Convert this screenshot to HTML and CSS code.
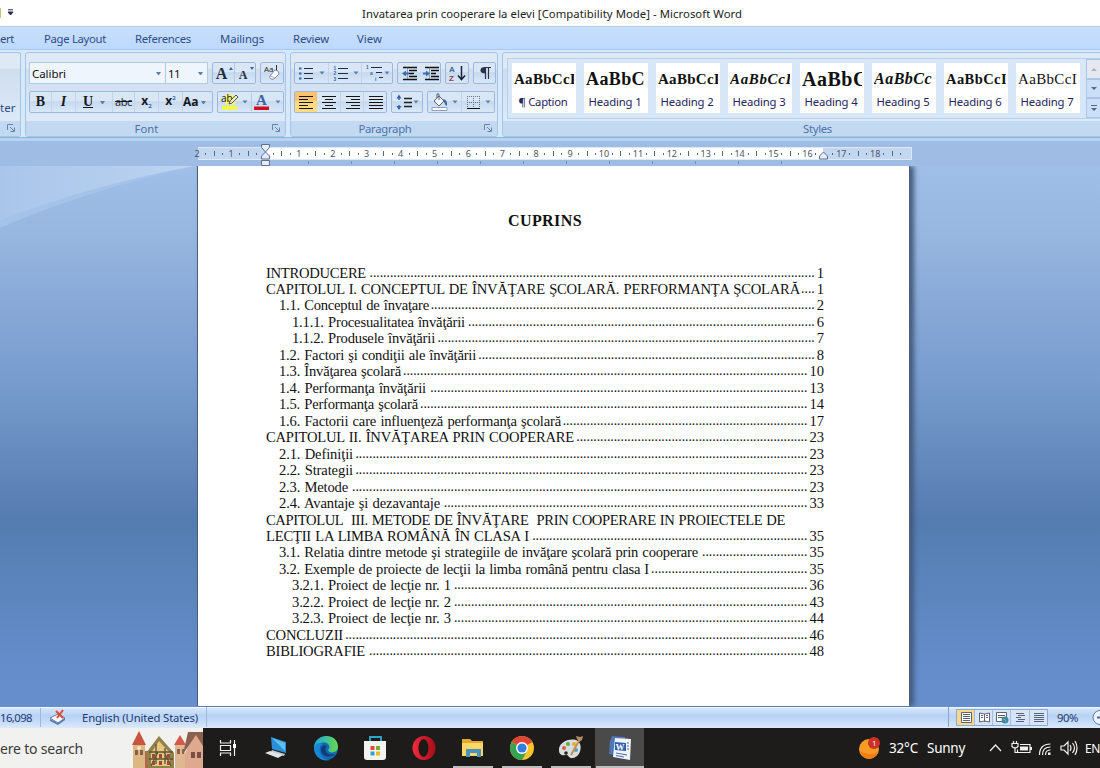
FILE: index.html
```html
<!DOCTYPE html>
<html lang="ro">
<head>
<meta charset="utf-8">
<title>Invatarea prin cooperare la elevi</title>
<link rel="stylesheet" href="styles.css">
</head>
<body>
<div class="window">
  <header class="titlebar">
    <i class="qat-edge"></i>
    <svg class="qat" width="7" height="7"><path d="M1 .8h5M1 3h5L3.500 6z" stroke="#222c50" fill="#222c50"/></svg>
    <span class="fit" data-width="380">Invatarea prin cooperare la elevi [Compatibility Mode] - Microsoft Word</span>
  </header>
  <nav class="tabs">
    <span class="fit tab-insert" data-width="14">ert</span>
    <span class="fit tab-layout" data-width="62">Page Layout</span>
    <span class="fit tab-refs" data-width="56">References</span>
    <span class="fit tab-mail" data-width="44">Mailings</span>
    <span class="fit tab-review" data-width="36">Review</span>
    <span class="fit tab-view" data-width="25">View</span>
  </nav>
  <section class="ribbon">
    <div class="group clipboard">
      <div class="body"><span class="painter">ter</span></div>
      <div class="label"><svg class="launch" width="8" height="8"><path d="M.5 6V.5H6M3 3l4 4M7.500 3.500v4h-4" fill="none" stroke="#6685ad"/></svg></div>
    </div>
    <div class="group font">
      <div class="body">
        <div class="row">
          <div class="combo family"><span class="fit" data-width="34">Calibri</span><i class="caret"></i></div>
          <div class="combo size"><span class="fit" data-width="12">11</span><i class="caret"></i></div>
          <div class="set grow"><span class="glyph big">A<i class="mark up"></i></span><span class="glyph small">A<i class="mark down"></i></span></div>
          <div class="set clear">
            <svg width="22" height="20"><text x="3" y="9" class="tiny">Aa</text><path d="M15.500 2v7" stroke="#333"/><path d="M9 13l5-6q4 0 4 4l-5 5q-5 1-4-3z" fill="#fff" stroke="#7d879f"/><path d="M10 13l4 2" stroke="#a7afc1"/></svg>
          </div>
        </div>
        <div class="row">
          <div class="set styles">
            <span class="cell b">B</span><span class="cell i">I</span><span class="cell u">U</span><span class="cell drop"><i class="caret"></i></span><span class="cell s">abc</span><span class="cell x">x<sub>2</sub></span><span class="cell x">x<sup>2</sup></span><span class="cell aa">Aa<i class="caret"></i></span>
          </div>
          <div class="set colours">
            <svg width="66" height="21"><path d="M4 14.500h15v3H4z" fill="#ffff1c"/><path d="M7 4q5-4 10 1v8H7z" fill="#f6f36b"/><text x="3" y="10" class="ab">ab</text><path d="M11 12l1-3 6-6 2 2-6 6z" fill="#f1edc6" stroke="#555"/><path d="M24.500 8.500h5l-2.500 3zM57.500 8.500h5l-2.500 3z" fill="#5d7fae"/><path d="M33.500 1v18" stroke="#b5cae6"/><path d="M36 14.500h15v3.500H36z" fill="#d0101c"/><text x="38" y="13" class="font-a">A</text></svg>
          </div>
        </div>
      </div>
      <div class="label"><span class="fit" data-width="24">Font</span><svg class="launch" width="8" height="8"><path d="M.5 6V.5H6M3 3l4 4M7.500 3.500v4h-4" fill="none" stroke="#6685ad"/></svg></div>
    </div>
    <div class="group paragraph">
      <div class="body">
        <div class="row">
          <div class="set lists">
            <svg width="98" height="21"><g stroke="#222d42"><path d="M9 5.500h9M9 10.500h9M9 15.500h9M43 5.500h10M43 10.500h10M43 15.500h10M76 4.500h11M81 9.500h6M84 14.500h4" /><path d="M4 5.500h2.500M4 10.500h2.500M4 15.500h2.500" stroke="#3c66aa" stroke-width="2"/></g><path d="M33.500 0v21M66.500 0v21" stroke="#c2d4ec"/><path d="M24.500 8.500h5l-2.500 3zM58.500 8.500h5l-2.500 3zM89.500 8.500h5l-2.500 3z" fill="#5d7fae"/><g class="numbers"><text x="38.500" y="6.500">1</text><text x="38.500" y="12.300">2</text><text x="38.500" y="18.100">3</text><text x="71" y="5.500">1</text><text x="75" y="11.500">a</text><text x="80" y="17.500">i</text></g></svg>
          </div>
          <div class="set indents">
            <svg width="43" height="21"><path d="M5 4.500h14M11 7.500h8M11 10.500h5M11 13.500h8M5 16.500h14M27 4.500h14M33 7.500h8M33 10.500h5M33 13.500h8M27 16.500h14" stroke="#111" stroke-width="1.300"/><path d="M9.500 4.500v12M31.500 4.500v12" stroke="#555" stroke-dasharray="1 1"/><path d="M4 10.500l4-3v2h3v2H8v2zM32 10.500l-4-3v2h-3v2h3v2z" fill="#386cb9"/></svg>
          </div>
          <div class="set sort">
            <svg width="23" height="21"><text x="3" y="8.500" class="sort-a">A</text><text x="3" y="18" class="sort-z">Z</text><path d="M15.500 3v13M12 12.500l3.500 4 3.500-4" fill="none" stroke="#172139" stroke-width="1.500"/></svg>
          </div>
          <div class="set mark-set"><svg width="21" height="21"><path d="M11.500 4v12M14.500 4v12M10 4.500h7" stroke="#2a3345" stroke-width="1.200"/><path d="M11.500 4q-5 0-5 3.200t5 3.300z" fill="#2a3345"/></svg></div>
        </div>
        <div class="row">
          <div class="set aligns">
            <svg width="92" height="21"><path d="M0 0h22v21H0z" fill="#fbc36c"/><path d="M0 9h22v12H0z" fill="#ffdb7d"/><path d="M45.500 0v21M68.500 0v21" stroke="#c2d4ec"/><path d="M4 4.500h14M4 7.500h9M4 10.500h14M4 13.500h9M4 16.500h14M27 4.500h14M30 7.500h8M27 10.500h14M30 13.500h8M27 16.500h14M51 4.500h14M56 7.500h9M51 10.500h14M56 13.500h9M51 16.500h14M74 4.500h14M74 7.500h14M74 10.500h14M74 13.500h14M74 16.500h14" stroke="#161616" stroke-width="1.200"/></svg>
          </div>
          <div class="set spacing"><svg width="31" height="21"><path d="M12 6.500h8M12 10.500h8M12 14.500h8" stroke="#222" stroke-width="1.400"/><path d="M7 4v4M7 13v4" stroke="#3563a8" stroke-width="1.400"/><path d="M4.500 6.500L7 2.500l2.500 4zM4.500 14L7 18l2.500-4z" fill="#3563a8"/><path d="M21.500 8.500h5l-2.500 3z" fill="#5d7fae"/></svg></div>
          <div class="set fill"><svg width="67" height="21"><path d="M4 15.500h15v3H4z" fill="#fff" stroke="#8ea0bb"/><path d="M6 9l5-5 5 5-5 5z" fill="#f6f8fb" stroke="#53627c"/><path d="M11 8V3q0-2-2-1v4" fill="none" stroke="#53627c"/><path d="M15 7q5 1 4 7-2-1-3-4z" fill="#416a9e"/><path d="M24.500 8.500h5l-2.500 3zM57.500 8.500h5l-2.500 3z" fill="#5d7fae"/><path d="M33.500 0v21" stroke="#c2d4ec"/><path d="M39 4.500h13M39 10.500h13M39.500 4v12M45.500 4v12M51.500 4v12" stroke="#65738b" stroke-dasharray="1 1"/><path d="M39 16.500h13" stroke="#111"/></svg></div>
        </div>
      </div>
      <div class="label"><span class="fit" data-width="53">Paragraph</span><svg class="launch" width="8" height="8"><path d="M.5 6V.5H6M3 3l4 4M7.500 3.500v4h-4" fill="none" stroke="#6685ad"/></svg></div>
    </div>
    <div class="group gallery">
      <div class="body">
        <div class="frame">
          <div class="card"><b><span class="fit" data-width="62">AaBbCcI</span></b><span class="fit" data-width="49">¶ Caption</span></div>
          <div class="card"><b class="h1"><span class="fit" data-width="59">AaBbC</span></b><span class="fit" data-width="53">Heading 1</span></div>
          <div class="card"><b><span class="fit" data-width="62">AaBbCcI</span></b><span class="fit" data-width="53">Heading 2</span></div>
          <div class="card"><b class="italic"><span class="fit" data-width="62">AaBbCcI</span></b><span class="fit" data-width="53">Heading 3</span></div>
          <div class="card"><b class="h4"><span class="fit" data-width="66">AaBbC</span></b><span class="fit" data-width="53">Heading 4</span></div>
          <div class="card"><b class="h5 italic"><span class="fit" data-width="58">AaBbCc</span></b><span class="fit" data-width="53">Heading 5</span></div>
          <div class="card"><b class="h6"><span class="fit" data-width="61">AaBbCcI</span></b><span class="fit" data-width="53">Heading 6</span></div>
          <div class="card"><b class="h7"><span class="fit" data-width="59">AaBbCcI</span></b><span class="fit" data-width="53">Heading 7</span></div>
          <div class="scroll"><i><svg width="7" height="4"><path d="M0 4h6L3 1z" fill="#a9b3c0"/></svg></i><i><svg width="7" height="4"><path d="M0 0h6L3 3z" fill="#50698f"/></svg></i><i><svg width="7" height="7"><path d="M0 0h6v1H0zM0 3h6L3 6z" fill="#50698f"/></svg></i></div>
        </div>
      </div>
      <div class="label"><span class="fit" data-width="29">Styles</span></div>
    </div>
  </section>
  <div class="rulerbar"><svg id="ruler" width="720" height="25"></svg></div>
  <main class="desk">
    <svg class="swoosh" width="198" height="66"><defs><linearGradient id="sheen" x1="0" x2="1"><stop stop-color="#a9c6ea"/><stop offset="1" stop-color="#bdd3f1"/></linearGradient></defs><path d="M0 0h198Q95 21 0 62z" fill="#a5c2e8"/><path d="M0 0h194Q95 18 0 54z" fill="url(#sheen)"/></svg>
    <article class="page">
      <h1 class="fit" data-width="74">CUPRINS</h1>
      <div class="toc" id="toc"></div>
    </article>
  </main>
  <footer class="status">
    <span class="fit words" data-width="32">16,098</span>
    <span class="proof"><svg width="18" height="16"><path d="M1 9l8-4 7 4-7 5z" fill="#f6f8fb" stroke="#687ba2"/><path d="M1 10v2l8 4 7-5V9l-7 5z" fill="#5b7bb5"/><path d="M7 2l7 7M14 1L8 9" stroke="#dc4a36" stroke-width="2"/></svg></span>
    <span class="fit lang" data-width="116">English (United States)</span>
    <span class="fill-space"></span>
    <div class="views"><svg width="92" height="17"><path d="M.5.500h91v16H.5z" fill="#d5e4f8" stroke="#8ba9d3"/><path d="M1 1h18v15H1z" fill="#fbd78c"/><path d="M18.500 1v15M36.500 1v15M54.500 1v15M73.500 1v15" stroke="#a4bde0"/><g fill="#fff" stroke="#5d6470"><path d="M5.500 3.500h10v10h-10z"/><path d="M23.500 4l5 1 5-1v9l-5-1-5 1zM28.500 5v8"/><path d="M40.500 3.500h10v9h-10z"/></g><path d="M7 5.500h7M7 7.500h7M7 9.500h7M7 11.500h7M25 6.500h2M25 8.500h2M30 6.500h2M30 8.500h2M42 6.500h7M42 8.500h7M60 4.500h8M62 6.500h7M60 8.500h5M62 10.500h7M60 12.500h8M78 4.500h10M78 6.500h10M78 8.500h10M78 10.500h10M78 12.500h10" stroke="#586476"/><circle cx="49" cy="11" r="3.500" fill="#3d86a5"/><path d="M47 10q3 0 3 3" stroke="#77c081" fill="none"/></svg></div>
    <span class="fit zoom" data-width="21">90%</span>
    <svg class="minus" width="8" height="17"><circle cx="8" cy="8.500" r="7" fill="#edf4ff" stroke="#597eac"/><path d="M5 8.500h3" stroke="#476894" stroke-width="2"/></svg>
  </footer>
  <div class="taskbar">
    <div class="search"><span class="fit" data-width="83">ere to search</span>
      <svg width="72" height="38"><path d="M2 14h12v24H2z" fill="#ddb782"/><path d="M1 15L8 1l7 14z" fill="#c8533f"/><path d="M4 20h3v5H4zM9 20h3v5H9z" fill="#8a5e4b"/><circle cx="8" cy="18" r="2" fill="#eee3c8"/><path d="M14 21h6v17h-6z" fill="#b56449"/><path d="M15 23L28 6l15 17v15H17z" fill="#8f8148"/><path d="M20 23l8-12 11 12v13H20z" fill="#e6c680"/><path d="M18 22h24M18 29h24M25 14v20M34 18v16M20 36l7-14M40 36l-7-14" stroke="#5c5433" stroke-width="1.300"/><path d="M21 24h3v4h-3zM28 24h3v4h-3zM36 24h3v4h-3zM21 31h3v4h-3zM28 31h3v4h-3zM36 31h3v4h-3z" fill="#9a4a3b"/><path d="M44 14h10v24H44z" fill="#deb893"/><path d="M43 15l6-10 6 10z" fill="#d65a49"/><path d="M46 19h3v5h-3zM51 19h2v5h-2z" fill="#90604c"/><path d="M54 24L62 3h10v35H54z" fill="#dfa990"/><path d="M52 24L57 2h15v14L65 5z" fill="#8b604e"/><path d="M60 22h4v6h-4zM66 22h4v6h-4z" fill="#784f44"/></svg>
    </div>
    <div class="app"><svg width="18" height="17"><path d="M1.500 0v3h10V0M1.500 16v-3h10v3M1.500 5.500h10v5h-10zM15.500 0v16" fill="none" stroke="#eee" stroke-width="1.200"/><path d="M14 4h3v4h-3z" fill="#fff"/></svg></div>
    <div class="app pc"><svg width="24" height="24"><path d="M6 1l15 5v11L7 13z" fill="#2990d6"/><path d="M7 2l13 5v8z" fill="#61bdf0"/><path d="M7 14l13 4-1 2-13-4z" fill="#bcc9d2"/><path d="M0 17l5-2 13 4-5 3z" fill="#e1e5e8"/></svg></div>
    <div class="app"><svg width="26" height="26"><defs><linearGradient id="edge" x1="0" x2="1"><stop stop-color="#1aa6df"/><stop offset="1" stop-color="#66d84e"/></linearGradient></defs><circle cx="13" cy="13" r="12" fill="#1268b5"/><path d="M1 12C3-3 25-2 25 12c0 6-9 7-10 3 4-4-1-9-7-7-4 1-6 3-7 6z" fill="url(#edge)"/><path d="M8 10c-4 6 1 15 9 15-9 2-16-4-16-12 1-4 5-6 9-4z" fill="#1687d0"/><path d="M14 11c-4 4 0 10 8 8-5 5-14 2-14-4 0-4 3-6 6-4z" fill="#143d78"/></svg></div>
    <div class="app"><svg width="26" height="26"><path d="M8 7V2h11v5" fill="none" stroke="#31a6cd" stroke-width="1.800"/><path d="M2 6h22v16q0 3-3 3H5q-3 0-3-3z" fill="#f3f3ef"/><path d="M8.500 11h4v4h-4z" fill="#e34b35"/><path d="M14 11h4v4h-4z" fill="#72ae3a"/><path d="M8.500 16.500h4v4h-4z" fill="#2da4dd"/><path d="M14 16.500h4v4h-4z" fill="#efb724"/></svg></div>
    <div class="app"><svg width="26" height="26"><defs><linearGradient id="opera" x1="0" x2="1"><stop stop-color="#f52a3d"/><stop offset="1" stop-color="#a70c18"/></linearGradient></defs><ellipse cx="13" cy="13" rx="11.500" ry="12" fill="url(#opera)"/><ellipse cx="12.500" cy="13" rx="5" ry="9" fill="#1c1919"/></svg></div>
    <div class="app open"><svg width="24" height="24"><path d="M1 3h8l2 2h11v15H1z" fill="#e6a82f"/><path d="M1 7h21v13H1z" fill="#ffd766"/><path d="M5 21v-8h15v8h-4v-4H9v4z" fill="#4b93bd"/></svg></div>
    <div class="app open"><svg width="26" height="26"><circle cx="13" cy="13" r="12" fill="#f8c52c"/><path d="M13 13L2.600 7A12 12 0 0123.400 7z" fill="#e14435"/><path d="M13 13l-10.400-6A12 12 0 0013 25l5-9z" fill="#38a351"/><circle cx="13" cy="13" r="6" fill="#fff"/><circle cx="13" cy="13" r="4.600" fill="#347de0"/></svg></div>
    <div class="app open"><svg width="26" height="26"><path d="M1 16C0 8 10 3 18 5c8 3 5 17-3 18-5 1-4-4-8-3-3 1-6-1-6-4z" fill="#d6dedf"/><circle cx="6" cy="13" r="2" fill="#d95e45"/><circle cx="10" cy="9" r="2" fill="#69a54c"/><circle cx="16" cy="9" r="2" fill="#e5ac35"/><circle cx="8" cy="18" r="1.800" fill="#22282d"/><circle cx="18" cy="15" r="2" fill="#47a4c8"/><path d="M13 20L22 4" stroke="#cd8a46" stroke-width="2"/><path d="M19 4l-1-3 4 1 3-1-1 4-3 2z" fill="#b98b60"/></svg></div>
    <div class="app open active"><svg width="26" height="26"><path d="M5 1l13 1v20L2 19 3 6z" fill="#5275b3"/><path d="M8 3l16 1-1 21-17-3z" fill="#f0f4fa"/><path d="M8 7l11 1v8L8 15z" fill="#315fab"/><path d="M9 18l11 2M9 20.500l8 1.500M20 8h2M20 11h2M20 14h2" stroke="#4c6ca2"/><text x="8.500" y="15" class="word-w">W</text></svg></div>
    <span class="fill-space"></span>
    <div class="weather"><svg width="24" height="24"><circle cx="11" cy="13" r="10" fill="#f99b24"/><path d="M2 15q8 6 18 1-3 7-9 7t-9-8z" fill="#f27d14"/><circle cx="16" cy="7" r="6" fill="#cd3025"/><text x="14" y="10" class="badge">1</text></svg><span class="fit" data-width="29">32°C</span><span class="fit" data-width="38">Sunny</span></div>
    <div class="tray">
      <svg width="88" height="18"><g fill="none" stroke="#f2f2f2" stroke-width="1.200"><path d="M1 12l5.500-6L12 12M31 5.500h10v8H28.500v-3M24.500 2v2.500M27.500 2v2.500M23 4.500h6v3q-3 3-6 0zM26 8.500v5h3M50.500 16Q50.500 5 61.500 5M53.500 16q0-8 8-8M56.500 16q0-5 5-5M72 7h3l4-4v12l-4-4h-3zM81 6q2 3 0 6M83.500 4q4 5 0 10M86 2q4 7 0 14"/></g><path d="M31 7.500h8v4h-8zM41 8h2v3h-2zM59 13.500h2.500V16H59z" fill="#eee"/></svg>
      <span class="fit" data-width="15">EN</span>
    </div>
  </div>
</div>
<script src="app.js"></script>
</body>
</html>
```
FILE: styles.css
```css
* { box-sizing: border-box; }
body { margin: 0; overflow: hidden; font: 11.300px "Noto Sans", "Open Sans", sans-serif; color: #1e2b50; }
svg { display: block; flex: none; }
.window { width: 1100px; height: 768px; display: flex; flex-direction: column; overflow: hidden; }
.fit { white-space: pre; flex: none; }
.fill-space { flex: 1; }

.titlebar { height: 26px; background: #fff; display: flex; align-items: center; color: #222; }
.qat-edge { width: 1px; height: 10px; background: #b9c781; }
.qat { margin: -2px 345px 0 6px; }
.titlebar .fit { margin: 1px 0 0 3px; }
.tabs { height: 24px; background: linear-gradient(#c8dffb, #bdd9ff); border-top: 1px solid #b5cdea; border-bottom: 1px solid #a9c7ef; display: flex; align-items: center; color: #2f4c86; padding-top: 1px; }
.tab-layout { margin-left: 30px; }
.tab-refs { margin-left: 29px; }
.tab-mail { margin-left: 29px; }
.tab-review { margin-left: 29px; }
.tab-view { margin-left: 28px; }

.ribbon { height: 88px; display: flex; gap: 4px; padding: 2px 0 1px; background: #d6e8fc; border-bottom: 1px solid #83b9d8; }
.group { height: 85px; border: 1px solid #a6c5e6; border-radius: 3px; display: flex; flex-direction: column; background: linear-gradient(#dfe9f5 0 18%, #cfddee 20%, #dbe9f9 80%); overflow: hidden; flex: none; }
.clipboard { width: 21px; border-left: 0; border-radius: 0 3px 3px 0; }
.font { width: 261px; }
.paragraph { width: 208px; }
.gallery { width: 640px; }
.body { flex: 1; padding: 9px 3px 0; display: flex; flex-direction: column; gap: 7px; }
.clipboard .body { padding: 47px 0 0; }
.label { height: 15px; background: #c2d9f1; color: #4b72ad; display: flex; align-items: center; justify-content: center; position: relative; padding-right: 18px; }
.launch { position: absolute; right: 5px; top: 3px; }
.row { height: 22px; display: flex; gap: 4px; }
.set, .combo { height: 22px; border: 1px solid #9bb9df; border-radius: 2px; background: linear-gradient(#d9e6f5 0 45%, #c7d9ee 48%, #d9e8f9); display: flex; align-items: center; overflow: hidden; flex: none; }
.combo { background: #eef5fd; border-color: #b4cbe8; border-radius: 0; padding: 0 4px 0 2px; justify-content: space-between; color: #111; font-size: 11.500px; }
.family { width: 137px; }
.size { width: 43px; margin-left: -5px; }
.caret { border: 2.500px solid transparent; border-top: 3px solid #5d7fae; border-bottom: 0; width: 5px; height: 3px; flex: none; }
.grow { width: 44px; }
.clear { width: 24px; }
.glyph { width: 22px; height: 20px; text-align: center; font: bold 16px/21px "Liberation Serif", serif; color: #202a3e; position: relative; padding-right: 4px; }
.glyph.small { font-size: 12px; line-height: 24px; border-left: 1px solid #b5cae6; }
.mark { position: absolute; right: 1px; top: 4px; border: 2.500px solid transparent; }
.up { border-bottom: 3px solid #3562a2; border-top: 0; }
.down { border-top: 3px solid #3562a2; border-bottom: 0; }
.styles { width: 184px; }
.colours { width: 67px; }
.cell { height: 20px; width: 22px; text-align: center; font: bold 14px/20px "Liberation Serif", serif; color: #15191f; border-right: 1px solid #c2d4ec; flex: none; }
.cell.i { font-style: italic; width: 24px; }
.cell.u { text-decoration: underline; width: 24px; border: 0; }
.cell.drop { width: 13px; display: flex; align-items: center; }
.cell.s { text-decoration: line-through; font: 11px/20px "Open Sans", sans-serif; width: 22px; letter-spacing: -.4px; }
.cell.x { font: bold 12px/18px "Open Sans", sans-serif; width: 24px; }
.cell sub, .cell sup { font-size: 6px; color: #3466a9; line-height: 0; }
.cell.aa { width: 28px; border: 0; font: bold 12px/20px "Open Sans", sans-serif; display: flex; align-items: center; gap: 2px; }
.tiny { font: 8px "Open Sans", sans-serif; fill: #222; }
.ab { font: 10px "Open Sans", sans-serif; fill: #111; }
.font-a { font: bold 15px "Liberation Serif", serif; fill: #3865a5; }
.numbers { font: bold 4.800px "Liberation Sans", sans-serif; fill: #3865a5; }
.sort-a, .sort-z { font: bold 8px "Liberation Sans", sans-serif; fill: #3865a5; }
.sort-z { fill: #a43849; }
.lists { width: 99px; }
.indents { width: 44px; }
.sort { width: 24px; }
.mark-set { width: 23px; }
.aligns { width: 93px; }
.spacing { width: 32px; }
.fill { width: 68px; }
.painter { color: #2f4c86; font-size: 11.500px; }
.gallery .body { padding: 5px 0 0 4px; }
.frame { height: 61px; border: 1px solid #b9d0ec; background: #d8e7f8; padding: 4px 0 0 4px; display: flex; gap: 8px; }
.card { width: 64px; height: 50px; padding-right: 2px; background: #fff; flex: none; display: flex; flex-direction: column; align-items: center; color: #24245e; }
.card b { font: bold 15px/20px "Liberation Serif", serif; width: 60px; height: 25px; padding-top: 6px; color: #111; margin: 0 0 6px 2px; overflow: hidden; align-self: flex-start; flex: none; white-space: pre; }
.card .h1 { font-size: 18px; }
.card .h4 { font-size: 20px; }
.card .h5 { font-size: 16px; }
.card .h6 { font-size: 14.500px; }
.card .h7 { font-weight: normal; font-size: 15px; }
.card .italic { font-style: italic; }
.scroll { width: 16px; height: 59px; margin: -4px 0 0 -2px; display: flex; flex-direction: column; background: #cbdff8; }
.scroll i { flex: 1; border: 1px solid #a9c5e7; display: flex; align-items: center; padding-left: 4px; }
.scroll i:first-child { background: #e5e9ef; }
.gallery .label { padding-right: 9px; }

.rulerbar { height: 28px; background: #9ebce4; border-top: 3px solid #b9d3ef; padding-left: 194px; }
.ruler-text { font: 9px "Noto Sans", sans-serif; fill: #4b5568; text-anchor: middle; }
.desk { height: 541px; position: relative; background: linear-gradient(#9fbfe8, #98b7e0 12%, #7a9dd0 38%, #7299c9 43%, #5d82b7 60%, #547cb1 66%, #5680b5 70%, #648cc9 91%, #668fcf); padding-left: 197px; overflow: hidden; }
.swoosh { position: absolute; left: 0; top: 0; }
.page { width: 713px; height: 540px; background: #fff; border-left: 1px solid #4c6075; box-shadow: 4px 0 5px #445a7d; padding: 45px 86px 0 68px; position: relative; color: #111; border-right: 1px solid #4c6285; }
.page h1 { font: bold 16px/20px "Liberation Serif", serif; margin: 0 0 0 242px; width: max-content; }
.toc { margin-top: 33.500px; font: 14.600px/16.480px "Liberation Serif", serif; width: 558px; word-spacing: .8px; }
.entry { display: flex; height: 16.480px; }
.level-2 { padding-left: 13px; }
.level-3 { padding-left: 26px; }
.leader { flex: 1 1 0; width: 0; overflow: hidden; direction: rtl; font-size: 13.600px; white-space: nowrap; margin: 0 2px 0 1px; }

.status { height: 21px; border-top: 1px solid #eef6ff; background: linear-gradient(#d8e7fb, #b8d2f5 38%, #c1d8f7 60%, #dceafc); display: flex; align-items: center; color: #1c3a72; flex: none; padding-bottom: 2px; }
.words { margin-right: 8px; }
.proof { height: 19px; border-left: 1px solid #9eb9dd; padding: 1px 0 0 8px; width: 42px; }
.lang { margin-right: 8px; }
.lang + .fill-space { height: 20px; border-left: 1px solid #9eb9dd; border-right: 1px solid #86a4cf; margin-right: 7px; }
.zoom { margin: 0 14px 0 9px; }
.taskbar { height: 40px; background: #1d1c1b; display: flex; align-items: stretch; flex: none; color: #fff; }
.search { width: 203px; background: #f1f1f0; display: flex; align-items: center; justify-content: space-between; font-size: 14px; color: #3b3b3b; }
.search svg { align-self: flex-end; }
.app { width: 49px; display: flex; align-items: center; justify-content: center; }
.open { background: linear-gradient(#bdbdbd, #bdbdbd) bottom/40px 2px no-repeat; }
.active { background: linear-gradient(#bdbdbd, #bdbdbd) bottom/48px 2px no-repeat #4b4a4a; }
.word-w { font: bold 9px "Liberation Serif", serif; fill: #fff; }
.weather { display: flex; align-items: center; gap: 9px; font-size: 13.500px; margin-right: 24px; }
.weather svg { margin-right: -2px; }
.badge { font: 8px "Open Sans", sans-serif; fill: #fff; }
.tray { width: 111px; display: flex; align-items: center; gap: 8px; font-size: 12px; }
.tray svg { overflow: visible; }
```
FILE: app.js
```js
// [level, title, title width in px, page number]
const entries = [
  [1, "INTRODUCERE", 100, "1"],
  [1, "CAPITOLUL I. CONCEPTUL DE ÎNVĂŢARE ŞCOLARĂ. PERFORMANŢA ŞCOLARĂ", 534, "1"],
  [2, "1.1. Conceptul de învaţare", 150, "2"],
  [3, "1.1.1. Procesualitatea învăţării", 173, "6"],
  [3, "1.1.2. Produsele învăţării", 143, "7"],
  [2, "1.2. Factori şi condiţii ale învăţării", 197, "8"],
  [2, "1.3. Învăţarea şcolară", 122, "10"],
  [2, "1.4. Performanţa învăţării", 147, "13"],
  [2, "1.5. Performanţa şcolară", 139, "14"],
  [2, "1.6. Factorii care influenţeză performanţa şcolară", 282, "17"],
  [1, "CAPITOLUL II. ÎNVĂŢAREA PRIN COOPERARE", 308, "23"],
  [2, "2.1. Definiţii", 74, "23"],
  [2, "2.2. Strategii", 74, "23"],
  [2, "2.3. Metode", 69, "23"],
  [2, "2.4. Avantaje şi dezavantaje", 161, "33"],
  [1, "CAPITOLUL  III. METODE DE ÎNVĂŢARE  PRIN COOPERARE IN PROIECTELE DE", 519, ""],
  [1, "LECŢII LA LIMBA ROMÂNĂ ÎN CLASA I", 263, "35"],
  [2, "3.1. Relatia dintre metode şi strategiile de invăţare şcolară prin cooperare", 419, "35"],
  [2, "3.2. Exemple de proiecte de lecţii la limba română pentru clasa I", 370, "35"],
  [3, "3.2.1. Proiect de lecţie nr. 1", 159, "36"],
  [3, "3.2.2. Proiect de lecţie nr. 2", 159, "43"],
  [3, "3.2.3. Proiect de lecţie nr. 3", 159, "44"],
  [1, "CONCLUZII", 77, "46"],
  [1, "BIBLIOGRAFIE", 99, "48"]
];
document.getElementById("toc").innerHTML = entries.map(([level, title, width, page]) =>
  `<div class="entry level-${level}"><span class="fit" data-width="${width}">${title}</span>` +
  (page ? `<span class="leader">${".".repeat(Math.floor((558 - (level - 1) * 13 - width - page.length * 7.3 - 3) / 3.4))}</span><span>${page}</span>` : "") + "</div>"
).join("");

// Tracks each label to its designed width.
document.querySelectorAll(".fit").forEach(el => {
  const range = document.createRange();
  range.selectNodeContents(el);
  const natural = range.getBoundingClientRect().width;
  const spacing = (Number(el.dataset.width) - natural) / el.textContent.length;
  el.style.letterSpacing = spacing.toFixed(3) + "px";
});

// Ruler: one centimetre is 33.9px; the margin stops sit at 0 and 16.5.
const unit = 33.9, zero = 71;
let r = `<path d="M4 6h713v12H4z" fill="#c3d7f0"/><path d="M71 6h558v12H71z" fill="#fff"/><path d="M4 6.500h713M4 18.500h713M717.500 6v13" stroke="#dbe8f8" fill="none"/>`;
for (let q = -8; q <= 75; q++) {
  const x = zero + q * unit / 4;
  if (q === 0 || q === 66) continue;
  if (q % 4 === 0) r += `<text class="ruler-text" x="${x}" y="15.500">${Math.abs(q / 4)}</text>`;
  else r += `<path d="M${Math.floor(x) + .5} ${q % 2 ? 12 : 10}v${q % 2 ? 2 : 5}" stroke="#5a6679"/>`;
}
for (let i = 1; i < 13; i++) r += `<path d="M${zero + i * 43 + .5} 20v3" stroke="#7390b9"/>`;
r += `<path d="M67.500 3.500h8v3l-4 4.500-4-4.500zM67.500 18v-3l4-4 4 4v3zM67.500 19.500h8v5h-8zM625.500 18v-3l4-4 4 4v3z" fill="#e3ecf8" stroke="#5b7090"/>`;
document.getElementById("ruler").innerHTML = r;
```
